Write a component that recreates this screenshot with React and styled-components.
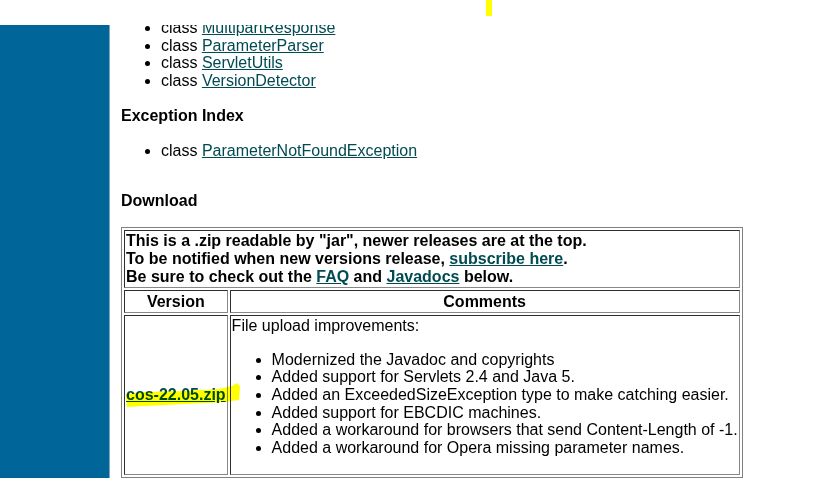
import React from 'react';
import styled, { createGlobalStyle } from 'styled-components';

const GlobalStyle = createGlobalStyle`
  html, body {
    margin: 0;
    padding: 0;
    background: #fff;
  }
  body {
    font-family: "Liberation Sans", Arial, sans-serif;
    font-size: 16px;
    line-height: 17.7px;
    color: #000;
  }
`;

const Page = styled.div`
  width: 818px;
  height: 478px;
  overflow: hidden;
  display: flex;
  flex-direction: column;
`;

const TopBand = styled.div`
  height: 25px;
  flex: none;
  background: #fff;
  display: flex;
`;

const Marker = styled.div`
  margin-left: 486px;
  width: 6px;
  height: 16px;
  background: #ffff00;
`;

const Main = styled.div`
  flex: 1;
  display: flex;
  overflow: hidden;
`;

const Sidebar = styled.div`
  width: 109px;
  flex: none;
  background: #006699;
  border-right: 1px solid #7fa6c4;
`;

const Content = styled.div`
  flex: 1;
  padding-left: 11px;
  margin-top: -6px;
`;

const List = styled.ul`
  margin: ${p => p.$first ? '0 0 17px' : '17px 0'};
  padding-left: 40px;
  list-style: disc;
`;

const Heading = styled.h3`
  font-size: 16px;
  font-weight: bold;
  margin: ${p => p.$spaced ? '33px 0 17px' : '17px 0'};
  line-height: 17.7px;
`;

const Link = styled.a`
  color: #004a52;
  text-decoration: underline;
  font-weight: ${p => p.$bold ? 'bold' : 'inherit'};
`;

const Table = styled.table`
  border: 1px solid #808080;
  border-collapse: separate;
  border-spacing: 2px;
`;

const Cell = styled.td`
  border: 1px solid;
  border-color: #2e2e2e #888 #888 #2e2e2e;
  padding: 1px;
  vertical-align: middle;
  text-align: ${p => p.$center ? 'center' : 'left'};
  font-weight: ${p => p.$bold ? 'bold' : 'normal'};
  line-height: ${p => p.$bold ? '18px' : '17.7px'};
  position: relative;
`;

const HeadCell = styled.th`
  border: 1px solid;
  border-color: #2e2e2e #888 #888 #2e2e2e;
  padding: 1px;
  font-weight: bold;
  text-align: center;
  line-height: 19px;
`;

const CommentList = styled.ul`
  margin: 16px 0;
  padding-left: 40px;
`;

const Highlight = styled.svg`
  position: absolute;
  left: -1px;
  top: 50%;
  margin-top: -14px;
  width: 120px;
  height: 28px;
  mix-blend-mode: multiply;
  pointer-events: none;
  overflow: visible;
`;

const classes = ['MultipartResponse', 'ParameterParser', 'ServletUtils', 'VersionDetector'];
const changes = [
  'Modernized the Javadoc and copyrights',
  'Added support for Servlets 2.4 and Java 5.',
  'Added an ExceededSizeException type to make catching easier.',
  'Added support for EBCDIC machines.',
  'Added a workaround for browsers that send Content-Length of -1.',
  'Added a workaround for Opera missing parameter names.',
];

export default function App() {
  return (
    <Page>
      <GlobalStyle />
      <TopBand>
        <Marker />
      </TopBand>
      <Main>
        <Sidebar />
        <Content>
          <List $first>
            {classes.map(c => (
              <li key={c}>class <Link href="#">{c}</Link></li>
            ))}
          </List>
          <Heading>Exception Index</Heading>
          <List>
            <li>class <Link href="#">ParameterNotFoundException</Link></li>
          </List>
          <Heading $spaced>Download</Heading>
          <Table>
            <tbody>
              <tr>
                <Cell colSpan={2} $bold>
                  This is a .zip readable by "jar", newer releases are at the top.<br />
                  To be notified when new versions release, <Link href="#">subscribe here</Link>.<br />
                  Be sure to check out the <Link href="#">FAQ</Link> and <Link href="#">Javadocs</Link> below.
                </Cell>
              </tr>
              <tr>
                <HeadCell>Version</HeadCell>
                <HeadCell>Comments</HeadCell>
              </tr>
              <tr>
                <Cell>
                  <Link href="#" $bold>cos-22.05.zip</Link>
                  <Highlight viewBox="0 0 120 28">
                    <path
                      d="M2 13 L20 11 L60 10 L95 8 L108 5 L113 2 L116 5 L115 19 L100 21 L60 23 L20 25 L3 26 Z"
                      fill="#ffff00"
                    />
                  </Highlight>
                </Cell>
                <Cell>
                  File upload improvements:
                  <CommentList>
                    {changes.map(c => <li key={c}>{c}</li>)}
                  </CommentList>
                </Cell>
              </tr>
            </tbody>
          </Table>
        </Content>
      </Main>
    </Page>
  );
}
